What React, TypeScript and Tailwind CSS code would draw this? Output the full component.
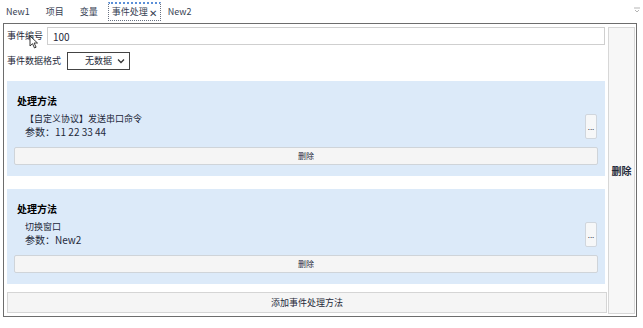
import React from "react";

const font = { fontFamily: '"Noto Sans CJK SC", "Liberation Sans", sans-serif' };

function Tab({ label, active }: { label: string; active?: boolean }) {
  if (active) {
    return (
      <div className="flex h-[19px] items-center border border-dotted border-gray-500 border-t-[#5b8fd8] border-t-2 px-[3px] text-[9px] text-gray-700">
        事件处理<span className="ml-[1px] text-[10px]">✕</span>
      </div>
    );
  }
  return <div className="flex h-[19px] items-center px-[5px] text-[9px] text-gray-700">{label}</div>;
}

function Method({ line1, line2 }: { line1: string; line2: string }) {
  return (
    <div className="flex flex-col bg-[#dceaf9] px-[7px] pb-[11px] pt-[13px]">
      <div className="ml-[3px] h-[14px] text-[10px] font-bold leading-[14px] text-black">处理方法</div>
      <div className="mt-[4px] flex items-end justify-between">
        <div className="ml-[11px] text-gray-800">
          <div className="text-[9px] leading-[13px]">{line1}</div>
          <div className="text-[10px] leading-[14px]">{line2}</div>
        </div>
        <div className="mr-[1px] flex h-[25px] w-[12px] items-center justify-center rounded-[2px] border border-[#d0d6dd] bg-[#f6f7f8] text-[8px] leading-none text-gray-700">
          ...
        </div>
      </div>
      <div className="mt-[8px] flex h-[18px] items-center justify-center rounded-[2px] border border-[#cfd4d9] bg-[#f5f5f5] text-[8px] text-gray-800">
        删除
      </div>
    </div>
  );
}

export default function App() {
  return (
    <div className="relative h-[328px] w-[643px] overflow-hidden bg-white" style={font}>
      <div className="flex h-[23px] items-start pl-[1px] pt-[2px]">
        <Tab label="New1" />
        <div className="w-[6px]" />
        <Tab label="项目" />
        <div className="w-[6px]" />
        <Tab label="变量" />
        <div className="w-[5px]" />
        <Tab label="事件处理" active />
        <div className="w-[2px]" />
        <Tab label="New2" />
        <div className="flex-1" />
        <svg className="mr-[3px] mt-[5px]" width="6" height="6" viewBox="0 0 6 6">
          <path d="M0 1h6M1 3l2 2 2-2" stroke="#b5b5b5" strokeWidth="1" fill="none" />
        </svg>
      </div>
      <div className="ml-[3px] flex h-[294px] w-[634px] border border-[#6d6d6d]">
        <div className="flex flex-1 flex-col pl-[3px] pt-[3px]">
          <div className="flex h-[18px] items-center">
            <div className="w-[40px] text-[9px] text-gray-800">事件编号</div>
            <div className="flex h-[18px] flex-1 items-center border border-[#cfcfcf] pl-[5px] text-[10px] text-gray-800">
              100
            </div>
          </div>
          <div className="mt-[7px] flex h-[18px] items-center">
            <div className="w-[60px] text-[9px] text-gray-800">事件数据格式</div>
            <div className="flex h-[18px] w-[63px] items-center justify-between border border-[#444] pl-[17px] pr-[4px] text-[9px] text-gray-800">
              <span>无数据</span>
              <svg width="8" height="6" viewBox="0 0 8 6">
                <path d="M1 1.5l3 3 3-3" stroke="#333" strokeWidth="1.3" fill="none" />
              </svg>
            </div>
          </div>
          <div className="mt-[11px]">
            <Method line1="【自定义协议】发送串口命令" line2="参数：11 22 33 44" />
          </div>
          <div className="mt-[13px]">
            <Method line1="切换窗口" line2="参数：New2" />
          </div>
          <div className="mr-[-2px] mt-[8px] flex h-[21px] items-center justify-center border border-[#d5d5d5] bg-[#f5f5f5] text-[9px] text-gray-800">
            添加事件处理方法
          </div>
        </div>
        <div className="ml-[3px] mr-[1px] mt-[3px] mb-[2px] flex w-[27px] items-center justify-center border border-[#d7d7d7] bg-[#f7f7f7] text-[10px] font-bold text-gray-800">
          删除
        </div>
      </div>
      <svg className="absolute left-[29px] top-[35px]" width="10" height="14" viewBox="0 0 10 14">
        <path d="M1 1v10l2.5-2.3 2 4.3 1.6-.8-2-4.2H8.5z" fill="#fff" stroke="#222" strokeWidth="0.9" strokeLinejoin="round" />
      </svg>
    </div>
  );
}
